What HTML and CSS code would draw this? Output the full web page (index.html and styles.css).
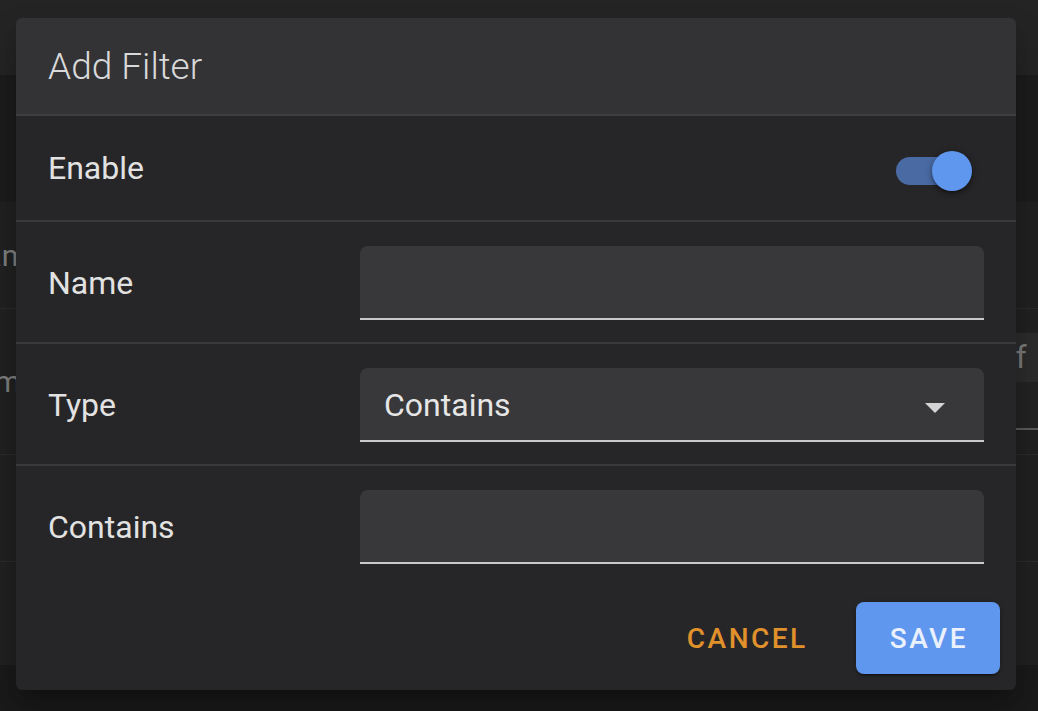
FILE: index.html
```html
<!DOCTYPE html>
<html>
<head>
<meta charset="utf-8">
<link rel="stylesheet" href="styles.css">
</head>
<body>
<div class="page">
  <div class="appbar"></div>
  <div class="band"></div>
  <div class="list">
    <div class="list-row"><span class="cut-text cut-1">Name</span></div>
    <div class="list-row list-row-tall">
      <span class="cut-text cut-2">Term</span>
      <div class="side-field">
        <div class="side-field-top">af</div>
        <div class="side-field-bottom"></div>
      </div>
    </div>
    <div class="list-row"></div>
    <div class="list-row list-row-last"></div>
  </div>
</div>

<div class="overlay">
  <div class="dialog">
    <div class="dialog-title">Add Filter</div>
    <div class="form-row form-row-switch">
      <div class="form-label">Enable</div>
      <div class="switch">
        <div class="switch-track"></div>
        <div class="switch-thumb"></div>
      </div>
    </div>
    <div class="form-row">
      <div class="form-label">Name</div>
      <div class="field"></div>
    </div>
    <div class="form-row">
      <div class="form-label">Type</div>
      <div class="field field-select">
        <span class="field-value">Contains</span>
        <svg class="field-arrow" width="20" height="10" viewBox="0 0 20 10"><path d="M0 0 L20 0 L10 10 Z" fill="#d4d4d4"/></svg>
      </div>
    </div>
    <div class="form-row form-row-last">
      <div class="form-label">Contains</div>
      <div class="field"></div>
    </div>
    <div class="dialog-actions">
      <button class="btn btn-text">CANCEL</button>
      <button class="btn btn-primary">SAVE</button>
    </div>
  </div>
</div>
</body>
</html>
```

FILE: styles.css
```css
html, body {
  margin: 0;
  padding: 0;
}
body {
  width: 1038px;
  height: 711px;
  overflow: hidden;
  background: #1a1a1a;
  font-family: Roboto, "Liberation Sans", sans-serif;
  position: relative;
}
.page {
  display: flex;
  flex-direction: column;
}
.appbar {
  height: 75px;
  background: #242424;
}
.band {
  height: 127px;
  background: #1c1c1c;
}
.list {
  display: flex;
  flex-direction: column;
  background: #212121;
}
.list-row {
  height: 106px;
  border-bottom: 1px solid #2c2c2c;
  display: flex;
  align-items: center;
  overflow: hidden;
}
.list-row-tall {
  height: 145px;
}
.list-row-last {
  height: 103px;
  border-bottom: none;
}
.cut-text {
  font-size: 30px;
  color: #7e7e7e;
}
.cut-1 { margin-left: -36px; }
.cut-2 { margin-left: -48px; }
.side-field {
  margin-left: auto;
  margin-right: -80px;
  width: 104px;
  align-self: flex-start;
  margin-top: 24px;
  display: flex;
  flex-direction: column;
}
.side-field-top {
  height: 49px;
  background: #2c2c2c;
  color: #7a7a7a;
  font-size: 32px;
  line-height: 49px;
  padding-left: 0;
  text-indent: -16px;
  overflow: hidden;
}
.side-field-bottom {
  height: 46px;
  background: #232323;
  border-bottom: 2px solid #5a5a5a;
}

.overlay {
  position: absolute;
  left: 0;
  top: 0;
  right: 0;
  bottom: 0;
}
.dialog {
  position: absolute;
  left: 16px;
  top: 18px;
  width: 1000px;
  background: #262628;
  border-radius: 6px;
  overflow: hidden;
  box-shadow: 0 11px 15px -7px rgba(0,0,0,0.3), 0 24px 38px 3px rgba(0,0,0,0.2);
  display: flex;
  flex-direction: column;
}
.dialog-title {
  height: 96px;
  background: #333336;
  border-bottom: 2px solid #3e3e41;
  display: flex;
  align-items: center;
  padding-left: 32px;
  font-size: 37px;
  font-weight: 300;
  color: #d9d9d9;
}
.form-row {
  display: grid;
  grid-template-columns: 312px 1fr;
  align-items: center;
  padding: 24px 32px 22px;
  border-bottom: 2px solid #3a3a3c;
}
.form-row-switch {
  height: 106px;
  padding-top: 0;
  padding-bottom: 0;
  box-sizing: border-box;
}
.form-row-last {
  border-bottom: none;
}
.form-label {
  font-size: 32px;
  color: #e2e2e2;
}
.switch {
  justify-self: end;
  margin-right: 12px;
  width: 76px;
  height: 40px;
  position: relative;
  margin-top: 6px;
}
.switch-track {
  position: absolute;
  left: 0;
  top: 6px;
  width: 72px;
  height: 28px;
  border-radius: 14px;
  background: #4a6aa4;
}
.switch-thumb {
  position: absolute;
  right: 0;
  top: 0;
  width: 40px;
  height: 40px;
  border-radius: 50%;
  background: #5f97ee;
  box-shadow: 0 3px 4px rgba(0,0,0,0.35), 0 1px 8px rgba(0,0,0,0.2);
}
.field {
  height: 72px;
  background: #38383a;
  border-radius: 8px 8px 0 0;
  border-bottom: 2px solid #c9c9c9;
}
.field-select {
  display: flex;
  align-items: center;
  padding: 0 39px 0 24px;
}
.field-value {
  font-size: 32px;
  color: #e6e6e6;
  flex: 1;
  margin-top: 2px;
}
.field-arrow {
  display: block;
  margin-top: 8px;
}
.dialog-actions {
  display: flex;
  justify-content: flex-end;
  align-items: center;
  gap: 16px;
  padding: 16px 16px 16px;
}
.btn {
  height: 72px;
  border: none;
  border-radius: 8px;
  font-family: Roboto, "Liberation Sans", sans-serif;
  font-size: 28px;
  font-weight: 500;
  letter-spacing: 2.5px;
  padding: 0 32px 0 34px;
  background: transparent;
}
.btn-text {
  color: #e0912b;
}
.btn-primary {
  background: #5f97ee;
  color: #eaf0fc;
  box-shadow: 0 3px 1px -2px rgba(0,0,0,0.3), 0 2px 2px rgba(0,0,0,0.2), 0 1px 5px rgba(0,0,0,0.2);
}
```
